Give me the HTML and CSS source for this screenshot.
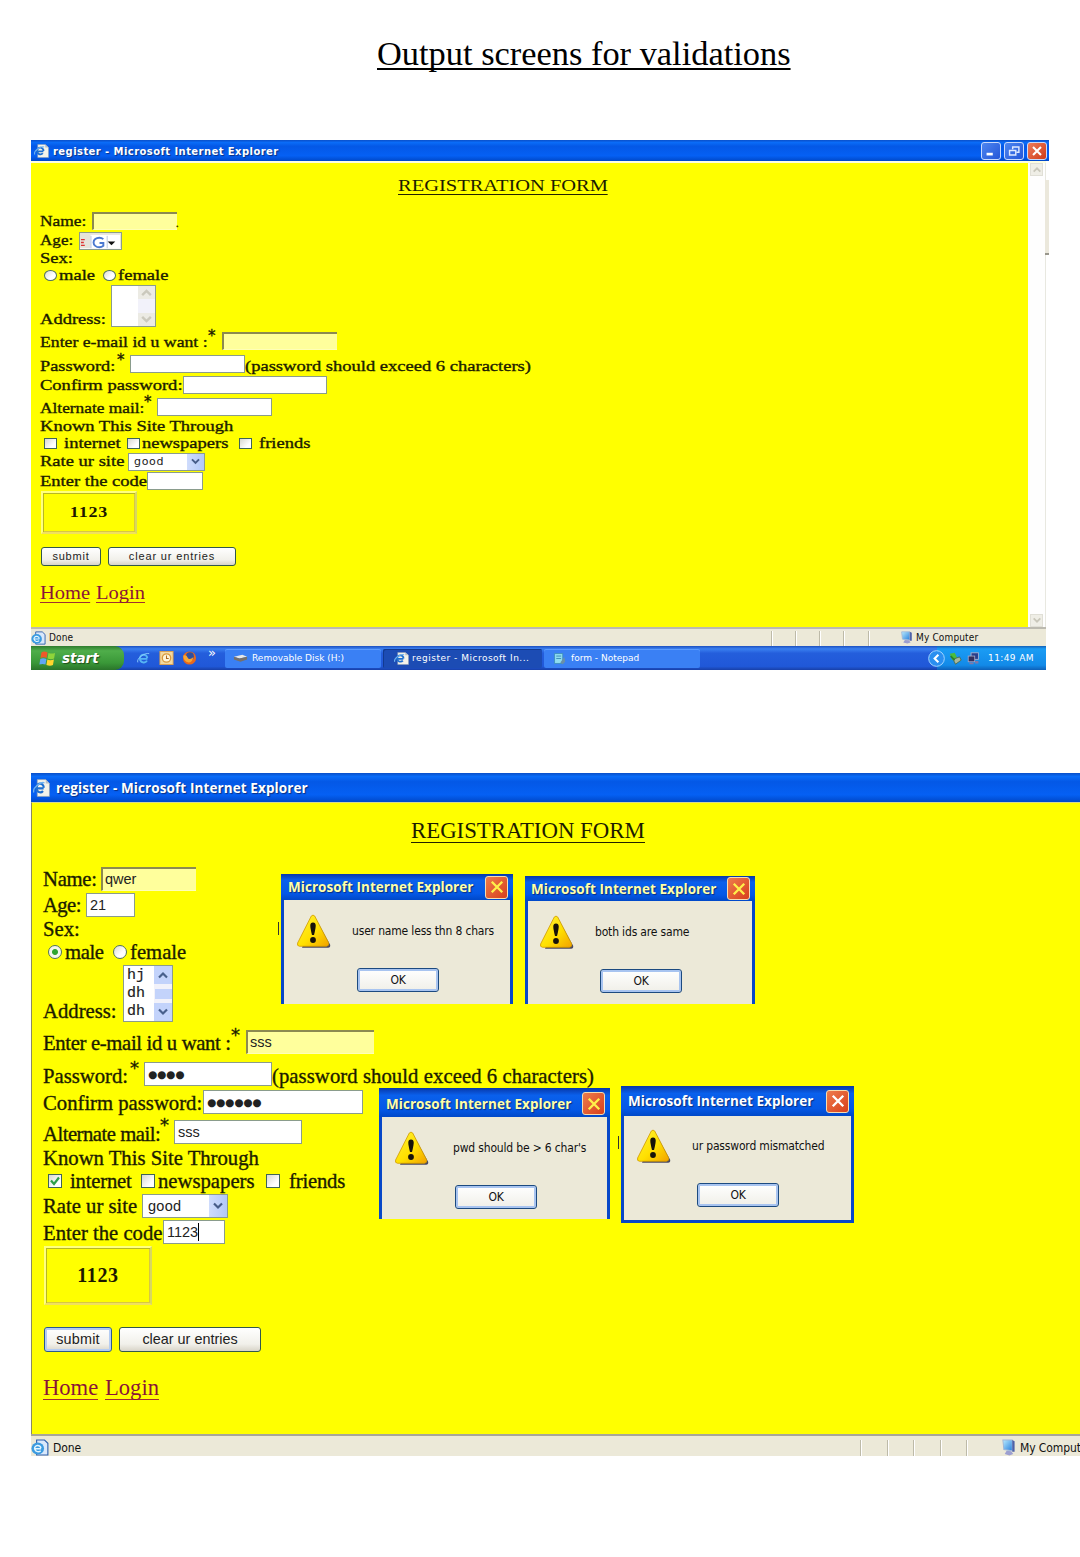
FILE: index.html
```html
<!DOCTYPE html>
<html lang="en">
<head>
<meta charset="utf-8">
<title>Output screens for validations</title>
<link rel="stylesheet" href="styles.css">
</head>
<body>
<svg class="defs" aria-hidden="true">
  <defs>
    <linearGradient id="warn" x1="0" y1="0" x2="1" y2="1"><stop offset="0" stop-color="#fff23a"/><stop offset=".55" stop-color="#ffe000"/><stop offset="1" stop-color="#f2a200"/></linearGradient>
    <linearGradient id="screenBlue" x1="0" y1="0" x2="1" y2="1"><stop offset="0" stop-color="#b8ecff"/><stop offset="1" stop-color="#2a80dc"/></linearGradient>
    <symbol id="ie-page" viewBox="0 0 16 16" preserveAspectRatio="none">
      <path d="M4 .5h8l3.500 3.500v11.500H4z" fill="#f4f3ea" stroke="#8c9bb0" stroke-width=".6"/>
      <path d="M12 .5v3.500h3.500" fill="#b8c0c8"/>
      <path d="M10 8.400H3.400a3.400 3.400 0 1 1 6.700-.6M9.400 10.600a3.400 3.400 0 0 1-6-2.400" fill="none" stroke="#1d6fd0" stroke-width="2"/>
      <path d="M.8 12C-.8 8 7 2.200 10.800 3.400" fill="none" stroke="#6cb0f0" stroke-width="1.300"/>
    </symbol>
    <symbol id="ie-status" viewBox="0 0 16 16" preserveAspectRatio="none">
      <path d="M5 1h7l3 3v11H5z" fill="#d9e8fb" stroke="#2c5fae" stroke-width="1"/>
      <circle cx="6" cy="9" r="5.600" fill="#3b9be0"/>
      <path d="M9 9.200H3.200a2.800 2.800 0 1 1 5.600-.6M8.600 11a3 3 0 0 1-5.200-1.400" fill="none" stroke="#e4f6ff" stroke-width="1.300"/>
    </symbol>
    <symbol id="computer" viewBox="0 0 16 16" preserveAspectRatio="none">
      <path d="M2 1l10 0v10L3 10z" fill="url(#screenBlue)" stroke="#9fb6d8" stroke-width="1"/>
      <path d="M6 11l5 .5 2 2.500-4 1.500-5-1.500z" fill="#9c9fd0"/>
      <path d="M12 1l2.500 1v10L12 12z" fill="#4f62a8"/>
    </symbol>
    <symbol id="warning" viewBox="0 0 34 34">
      <path d="M17.500 2.500L33 30.500q1 3-2 3.300H5" fill="#4a4860"/>
      <path d="M14.300 2Q16 .2 17.700 2L31.500 28.500Q32.500 32 29.500 32.300H2.500Q-.3 32 .6 29z" fill="url(#warn)" stroke="#d09a00" stroke-width=".8"/>
      <path d="M13.300 11.500q0-3 2.700-3t2.700 3q0 3-1.700 9.500h-2q-1.700-6.500-1.700-9.500z" fill="#17130a"/>
      <circle cx="16" cy="26" r="2.900" fill="#17130a"/>
    </symbol>
    <symbol id="cross" viewBox="0 0 12 12"><path d="M1.500 1.500l9 9M10.500 1.500l-9 9" fill="none" stroke="currentColor" stroke-width="2"/></symbol>
    <symbol id="up" viewBox="0 0 12 8"><path d="M2 6.500L6 2.500l4 4" fill="none" stroke="currentColor" stroke-width="2.200"/></symbol>
    <symbol id="down" viewBox="0 0 12 8"><path d="M2 1.500l4 4 4-4" fill="none" stroke="currentColor" stroke-width="2.200"/></symbol>
  </defs>
</svg>

<main class="page">
  <h1 class="heading">Output screens for validations</h1>

  <section class="window first">
    <header class="titlebar">
      <svg class="app-icon"><use href="#ie-page"/></svg>
      <span class="title">register - Microsoft Internet Explorer</span>
      <span class="win-btn"><svg viewBox="0 0 20 18"><path d="M5 12.500h7" stroke="#fff" stroke-width="3"/></svg></span>
      <span class="win-btn"><svg viewBox="0 0 20 18"><path d="M8.500 7V4.500h7v6H13M5 8.500h7v5H5z" fill="none" stroke="#dfe9ff" stroke-width="1.600"/></svg></span>
      <span class="win-btn red"><svg viewBox="0 0 20 18"><path d="M5.500 4.500l9 9M14.500 4.500l-9 9" stroke="#fff" stroke-width="2.300"/></svg></span>
    </header>
    <div class="viewport">
      <form class="form">
        <h2 class="form-title"><span class="ink">REGISTRATION FORM</span></h2>
        <div class="row r-name"><label class="l-name"><span class="ink">Name:</span></label><span class="field sunken f-name"></span><span class="dot">.</span></div>
        <div class="row r-age"><label class="l-age"><span class="ink">Age:</span></label><span class="field toolbar-bit"><svg viewBox="0 0 43 17"><path d="M0 0h43v17H0z" fill="#e6e4da"/><path d="M11 3h31v14H11z" fill="#fff"/><path d="M1 8h4M1 11h3M1 14h4" stroke="#d33" stroke-width="1.500"/><path d="M11.500 4v13M28.500 4v13" stroke="#b8c4e0"/><path d="M24.500 7.500a6 5 0 1 0 0 7v-3h-4" fill="none" stroke="#4a78d0" stroke-width="2"/><path d="M29 10h8l-4 4z" fill="#111"/></svg></span></div>
        <div class="row r-sex"><label><span class="ink">Sex:</span></label></div>
        <div class="row r-radio"><span class="radio"></span><label class="l-male"><span class="ink">male</span></label><span class="radio"></span><label><span class="ink">female</span></label></div>
        <div class="row r-address"><label class="l-address"><span class="ink">Address:</span></label><span class="field area"><span class="lines"></span><span class="bar off"><svg><use href="#up"/></svg><svg><use href="#down"/></svg></span></span></div>
        <div class="row r-email"><label class="l-email"><span class="ink">Enter e-mail id u want :</span></label><sup class="star">*</sup><span class="field sunken f-text"></span></div>
        <div class="row r-pass"><label class="l-pass"><span class="ink">Password:</span></label><sup class="star">*</sup><span class="field f-text"></span><span class="note"><span class="ink">(password should exceed 6 characters)</span></span></div>
        <div class="row r-confirm"><label class="l-confirm"><span class="ink">Confirm password:</span></label><span class="field f-wide"></span></div>
        <div class="row r-alt"><label class="l-alt"><span class="ink">Alternate mail:</span></label><sup class="star">*</sup><span class="field f-text"></span></div>
        <div class="row r-known"><label><span class="ink">Known This Site Through</span></label></div>
        <div class="row r-checks"><span class="check"></span><label class="l-net"><span class="ink">internet</span></label><span class="check"></span><label class="l-news"><span class="ink">newspapers</span></label><span class="check"></span><label class="l-friends"><span class="ink">friends</span></label></div>
        <div class="row r-rate"><label class="l-rate"><span class="ink">Rate ur site</span></label><span class="field select"><span class="val">good</span><span class="drop"><svg><use href="#down"/></svg></span></span></div>
        <div class="row r-code"><label class="l-code"><span class="ink">Enter the code</span></label><span class="field f-code"></span></div>
        <div class="captcha"><span class="ink">1123</span></div>
        <div class="buttons"><span class="button b-submit">submit</span><span class="button b-clear">clear ur entries</span></div>
        <nav class="links"><a class="k-home"><span class="ink">Home</span></a><a><span class="ink">Login</span></a></nav>
      </form>
      <div class="page-scroll"><span><svg><use href="#up"/></svg></span><span><svg><use href="#down"/></svg></span></div>
      <div class="edge-strip"></div>
    </div>
    <footer class="status">
      <svg class="status-icon"><use href="#ie-status"/></svg><span class="done">Done</span>
      <span class="cells"><i></i><i></i><i></i><i></i><i></i></span>
      <svg class="pc-icon"><use href="#computer"/></svg><span class="zone">My Computer</span>
    </footer>
    <div class="taskbar">
      <div class="start"><svg viewBox="0 0 20 16"><path d="M3 1.500q3-1.700 6.500 0L8.500 7.500q-3-1.500-6.500 0z" fill="#f0582a"/><path d="M10.500 2q3 1.500 7 0L16.500 8q-3 1.500-7 0z" fill="#8fd43a"/><path d="M1.800 8.500q3-1.700 6.500 0l-1 6q-3-1.500-6.500 0z" fill="#5fa6f5"/><path d="M9.300 9q3 1.500 7 0l-1 6q-3 1.500-7 0z" fill="#ffd52e"/></svg><b>start</b></div>
      <div class="quick">
        <svg viewBox="0 0 16 16"><path d="M12.500 9H4a4 4 0 1 1 8.300-1M12 11a4.300 4.300 0 0 1-8-2" fill="none" stroke="#56b4f4" stroke-width="2.200"/><path d="M1.500 13C-.5 9 9 1.500 14.500 3" fill="none" stroke="#8fd0ff"/></svg>
        <svg viewBox="0 0 16 16"><rect x=".5" y=".5" width="15" height="15" fill="#f3d9a0" stroke="#e0a048"/><circle cx="8" cy="8" r="4.800" fill="#fff5d8" stroke="#d99a3c" stroke-width="1.500"/><path d="M8 5v3.500h2.500" fill="none" stroke="#b06a20" stroke-width="1.200"/></svg>
        <svg viewBox="0 0 16 16"><circle cx="8" cy="8" r="7.500" fill="#e8681c"/><circle cx="8.500" cy="6" r="4.500" fill="#2f4f9f"/><path d="M.8 5q4-1 5 2.500t6.500-.5Q11 13 7 13 1 12 .8 5z" fill="#f9a832"/></svg>
      </div>
      <span class="chev">»</span>
      <div class="task"><svg viewBox="0 0 16 12"><path d="M1 4l9-2 5 2-8 2z" fill="#e8e8e8"/><path d="M1 4l6 2 8-2v3L8 9.500 1 7z" fill="#77706a"/></svg>Removable Disk (H:)</div>
      <div class="task active"><svg><use href="#ie-page"/></svg>register - Microsoft In...</div>
      <div class="task"><svg viewBox="0 0 16 16"><rect x="2" y="2" width="10" height="12" fill="#8fdcf0" stroke="#3c8fb8"/><path d="M4 5h6M4 8h6" stroke="#2f80b0"/><path d="M9 13l5-7 1 6-3 3z" fill="#6a90a8"/></svg>form - Notepad</div>
      <div class="tray">
        <svg class="tray-arrow" viewBox="0 0 18 18"><circle cx="9" cy="9" r="8.300" fill="#2a8ff0" stroke="#a8d8ff"/><path d="M11 5L7 9l4 4" fill="none" stroke="#fff" stroke-width="2.200"/></svg>
        <svg viewBox="0 0 16 16"><path d="M1 2l6-1 3 6-6 3z" fill="#4cbc3c"/><path d="M5 9l8-3 2 4-7 5z" fill="#a8b89c" stroke="#45654a"/><path d="M2 5l5 5" stroke="#2b7f2b" stroke-width="2"/></svg>
        <svg viewBox="0 0 16 16"><rect x="5" y="1" width="9" height="8" fill="#29408c" stroke="#b8b8d0"/><rect x="1.500" y="5" width="8" height="7" fill="#33305c" stroke="#a8a8c8"/><path d="M10 11h4v3h-4zM3 13h5v2H3z" fill="#8078a8"/></svg>
        <span>11:49 AM</span>
      </div>
    </div>
  </section>

  <section class="window second">
    <header class="titlebar">
      <svg class="app-icon"><use href="#ie-page"/></svg>
      <span class="title">register - Microsoft Internet Explorer</span>
    </header>
    <div class="viewport">
      <form class="form">
        <h2 class="form-title"><span class="ink">REGISTRATION FORM</span></h2>
        <div class="row r-name"><label class="l-name"><span class="ink">Name:</span></label><span class="field sunken f-name">qwer</span></div>
        <div class="row r-age"><label class="l-age"><span class="ink">Age:</span></label><span class="field f-age">21</span></div>
        <div class="row r-sex"><label><span class="ink">Sex:</span></label></div>
        <div class="row r-radio"><span class="radio on"></span><label class="l-male"><span class="ink">male</span></label><span class="radio"></span><label><span class="ink">female</span></label></div>
        <div class="row r-address"><label class="l-address"><span class="ink">Address:</span></label><span class="field area"><span class="lines">hj<br>dh<br>dh</span><span class="bar"><svg><use href="#up"/></svg><i></i><svg><use href="#down"/></svg></span></span></div>
        <div class="row r-email"><label class="l-email"><span class="ink">Enter e-mail id u want :</span></label><sup class="star">*</sup><span class="field sunken f-text">sss</span></div>
        <div class="row r-pass"><label class="l-pass"><span class="ink">Password:</span></label><sup class="star">*</sup><span class="field f-text secret">●●●●</span><span class="note"><span class="ink">(password should exceed 6 characters)</span></span></div>
        <div class="row r-confirm"><label class="l-confirm"><span class="ink">Confirm password:</span></label><span class="field f-wide secret">●●●●●●</span></div>
        <div class="row r-alt"><label class="l-alt"><span class="ink">Alternate mail:</span></label><sup class="star">*</sup><span class="field f-text">sss</span></div>
        <div class="row r-known"><label><span class="ink">Known This Site Through</span></label></div>
        <div class="row r-checks"><span class="check"><svg viewBox="0 0 12 12"><path d="M2 5.500l3 3.500 5-6.500" fill="none" stroke="#2fa048" stroke-width="2.200"/></svg></span><label class="l-net"><span class="ink">internet</span></label><span class="check"></span><label class="l-news"><span class="ink">newspapers</span></label><span class="check"></span><label class="l-friends"><span class="ink">friends</span></label></div>
        <div class="row r-rate"><label class="l-rate"><span class="ink">Rate ur site</span></label><span class="field select"><span class="val">good</span><span class="drop"><svg><use href="#down"/></svg></span></span></div>
        <div class="row r-code"><label class="l-code"><span class="ink">Enter the code</span></label><span class="field f-code"><span>1123</span><i class="caret"></i></span></div>
        <div class="captcha"><span class="ink">1123</span></div>
        <div class="buttons"><span class="button b-submit focus">submit</span><span class="button b-clear">clear ur entries</span></div>
        <nav class="links"><a class="k-home"><span class="ink">Home</span></a><a><span class="ink">Login</span></a></nav>
      </form>

      <div class="dialog d1"><div class="d-title"><span>Microsoft Internet Explorer</span><b><svg><use href="#cross"/></svg></b></div><div class="d-msg"><svg><use href="#warning"/></svg><p>user name less thn 8 chars</p></div><span class="ok">OK</span></div>
      <div class="dialog d2"><div class="d-title"><span>Microsoft Internet Explorer</span><b><svg><use href="#cross"/></svg></b></div><div class="d-msg"><svg><use href="#warning"/></svg><p>both ids are same</p></div><span class="ok">OK</span></div>
      <div class="dialog d3"><div class="d-title"><span>Microsoft Internet Explorer</span><b><svg><use href="#cross"/></svg></b></div><div class="d-msg"><svg><use href="#warning"/></svg><p>pwd should be &gt; 6 char's</p></div><span class="ok">OK</span></div>
      <div class="dialog d4"><div class="d-title"><span>Microsoft Internet Explorer</span><b><svg><use href="#cross"/></svg></b></div><div class="d-msg"><svg><use href="#warning"/></svg><p>ur password mismatched</p></div><span class="ok">OK</span></div>
      <i class="tick t1"></i><i class="tick t2"></i>
    </div>
    <footer class="status">
      <svg class="status-icon"><use href="#ie-status"/></svg><span class="done">Done</span>
      <span class="cells"><i></i><i></i><i></i><i></i><i></i></span>
      <svg class="pc-icon"><use href="#computer"/></svg><span class="zone">My Computer</span>
    </footer>
  </section>
</main>
</body>
</html>
```

FILE: styles.css
```css
* { box-sizing: border-box; }
body { margin: 0; background: #fff; }
.defs { position: absolute; width: 0; height: 0; }
svg { display: block; flex: none; }
.page { width: 1080px; height: 1557px; overflow: hidden; font-family: "Liberation Serif", "Times New Roman", serif; color: #1c1c00; }
.heading { margin: 0; padding: 33px 0 0 377px; height: 140px; font-weight: 400; font-size: 34.400px; line-height: 40px; color: #000; text-decoration: underline; text-decoration-thickness: 2px; text-underline-offset: 3px; text-decoration-skip-ink: none; white-space: nowrap; }

.window { margin-left: 31px; }
.first { width: 1018px; height: 529px; margin-bottom: 104px; }
.second { width: 1049px; overflow: hidden; }

.titlebar { display: flex; align-items: center; background: linear-gradient(#0a4fc8 0, #0a6cf8 12%, #0458e6 30%, #0560f4 75%, #0048c8 100%); color: #fff; font-family: "DejaVu Sans", sans-serif; font-weight: 700; white-space: nowrap; }
.title { flex: 1; text-shadow: 1px 1px 1px #0a2f80; }
.first .titlebar { height: 21px; padding: 1px 2px 0 3px; gap: 3px; }
.first .app-icon { width: 15px; height: 14px; }
.first .title { font-size: 10px; margin-left: 1px; letter-spacing: .43px; }
.second .titlebar { height: 29px; padding: 1px 0 0 2px; }
.second .app-icon { width: 17px; height: 18px; }
.second .title { font-family: "Open Sans", sans-serif; font-size: 13.500px; margin-left: 6px; letter-spacing: .1px; }
.win-btn { width: 20px; height: 18px; border: 1px solid #c9dafc; border-radius: 3px; background: linear-gradient(135deg, #4d86f0, #2456d8); }
.win-btn svg { width: 18px; height: 16px; }
.red { background: linear-gradient(135deg, #ee7c5c, #cf3c18); }

.viewport { position: relative; display: flex; }
.first .viewport { height: 466px; border-top: 2px solid #fdfde0; width: 1015px; }
.second .viewport { height: 632px; border-left: 1px solid #8a8a60; border-top: 1px solid #d8d890; }
.form { flex: 1; margin: 0; background: #ff0; white-space: nowrap; }
.page-scroll { width: 18px; padding: 0 2px; display: flex; flex-direction: column; justify-content: space-between; background: #fefefe; border-right: 1px solid #e8e8e0; }
.page-scroll span { height: 13px; background: #efeee6; border: 1px solid #e0dfd6; color: #c9c7ba; display: grid; place-items: center; }
.page-scroll svg { width: 10px; height: 7px; }
.edge-strip { position: absolute; left: 1014px; top: 17px; width: 4px; height: 75px; background: #ebe8dc; border-bottom: 2px solid #99978c; }

.form-title { margin: 0; font-weight: 400; text-decoration: none; }
.first .form-title { height: 48px; padding: 13px 0 0 367px; font-size: 17px; line-height: 20px; }
.second .form-title { height: 62px; padding: 15px 0 0 379px; font-size: 22.800px; line-height: 26px; }
.form-title .ink { border-bottom: 1px solid #222200; display: inline-block; }
.first .form-title .ink { line-height: 16px; transform: scaleX(1.205); }
.second .form-title .ink { line-height: 22px; }

.ink { display: inline-block; transform-origin: 0 50%; }
.row { display: flex; align-items: center; -webkit-text-stroke: .35px #1c1c00; }
.row label { flex: none; }
.field { flex: none; display: flex; align-items: center; background: #fff; border: 1px solid #8a9c8c; overflow: hidden; color: #222; font-family: "Liberation Sans", Arial, sans-serif; -webkit-text-stroke: 0; }
.sunken { background: #ffff9c; border: 0; border-top: 2px solid #8c8a50; border-left: 2px solid #8c8a50; border-bottom: 1px solid #ffffb8; }
.star { flex: none; align-self: flex-start; font-family: "DejaVu Sans", sans-serif; font-weight: 400; line-height: 1; }
.radio { flex: none; border: 1px solid #4f7064; border-radius: 50%; background: linear-gradient(135deg, #dcdcd0, #fff 60%); }
.on { background: radial-gradient(circle, #2fa52f 0 2.500px, #f4f6ec 3.500px); }
.check { flex: none; border: 1px solid #3f6458; background: linear-gradient(135deg, #d8d8d0, #fff 70%); }
.check svg { width: 12px; height: 12px; }
.select { justify-content: space-between; }
.drop { display: grid; place-items: center; background: linear-gradient(90deg, #cfdcfc, #b2c8f6); color: #465c88; height: 100%; }
.bar { display: flex; flex-direction: column; justify-content: space-between; background: #f2f2fa; color: #48608c; height: 100%; }
.bar svg { background: #c3d3fb; padding: 4px 2px; }
.off { color: #cbc9bd; }
.off svg { background: #ecebe4; }
.captcha { display: grid; place-items: center; font-weight: 700; border: 2px solid #ffff80; border-right-color: #d8d860; border-bottom-color: #f0e060; box-shadow: inset 1px 1px #b8b820, inset -1px -1px #d8c840; color: #1c1800; }
.buttons, .links { display: flex; }
.button { display: grid; place-items: center; border: 1px solid #32584c; border-radius: 3px; background: linear-gradient(#fff, #f1f0ea 70%, #d8d4c8); font-family: "Liberation Sans", Arial, sans-serif; color: #222; }
.focus { border-color: #2a5a90; box-shadow: inset 0 0 0 2px #b4ccf2; }
.links a { color: #8a1438; }
.links .ink { border-bottom: 1px solid #a03030; }

/* first form: wide glyphs on short lines */
.first .row, .first .links { font-size: 15px; line-height: 15px; padding-left: 9px; }
.first .row .ink { transform: scaleX(1.235); }
.first .row .l-name .ink { transform: scaleX(1.160); }
.first .row .l-age .ink { transform: scaleX(1.140); }
.first .row .l-email .ink { transform: scaleX(1.180); }
.first .row .l-alt .ink { transform: scaleX(1.155); }
.first .row .l-pass .ink { transform: scaleX(1.220); }
.first .r-name { height: 20px; }
.first .r-age { height: 19px; }
.first .r-sex { height: 16px; }
.first .r-radio { height: 18px; padding-left: 13px; }
.first .r-address { height: 45px; align-items: flex-end; padding-bottom: 2px; }
.first .r-email { height: 24px; }
.first .r-pass { height: 22px; }
.first .r-confirm { height: 20px; }
.first .r-alt { height: 23px; }
.first .r-known { height: 16px; }
.first .r-checks { height: 18px; padding-left: 13px; }
.first .r-rate, .first .r-code { height: 19px; }
.first .l-name { width: 52px; }
.first .l-age { width: 39px; }
.first .l-male { width: 44px; }
.first .l-address { width: 71px; }
.first .l-email { width: 168px; padding-top: 2px; }
.first .l-pass { width: 77px; padding-top: 4px; }
.first .l-confirm { width: 143px; }
.first .l-alt { width: 104px; padding-top: 4px; }
.first .l-net { width: 63px; margin-left: 7px; }
.first .l-news { width: 97px; margin-left: 2px; }
.first .l-friends { margin-left: 7px; }
.first .l-rate { width: 88px; }
.first .l-code { width: 107px; padding-top: 1px; }
.first .note { padding-top: 4px; }
.first .star { width: 14px; font-size: 15px; }
.first .r-pass .star, .first .r-alt .star { width: 13px; }
.first .radio { width: 13px; height: 11px; margin-right: 2px; }
.first .check { width: 13px; height: 11px; }
.first .field { height: 18px; }
.first .f-name { width: 85px; }
.first .dot { align-self: flex-end; font-size: 10px; margin-left: -1px; }
.first .toolbar-bit { width: 43px; }
.first .f-text { width: 115px; }
.first .f-wide { width: 144px; }
.first .f-code { width: 56px; }
.first .area { width: 45px; height: 42px; justify-content: flex-end; }
.first .bar { width: 17px; }
.first .bar svg { width: 17px; height: 13px; padding: 2px; }
.first .select { width: 77px; font-size: 11px; letter-spacing: .7px; padding-left: 5px; font-family: "DejaVu Sans", sans-serif; }
.first .drop { width: 17px; }
.first .drop svg { width: 11px; height: 7px; }
.first .captcha { margin: 1px 0 0 10px; width: 96px; height: 43px; font-size: 15px; letter-spacing: .7px; }
.first .captcha .ink { transform: scaleX(1.200); transform-origin: 50%; }
.first .buttons { margin: 13px 0 0 10px; gap: 7px; font-size: 11px; letter-spacing: .8px; }
.first .b-clear { letter-spacing: .85px; }
.first .button { height: 19px; padding-bottom: 1px; }
.first .b-submit { width: 60px; }
.first .b-clear { width: 128px; }
.first .links { margin-top: 19px; font-size: 18px; line-height: 17px; }
.first .links .ink { transform: scaleX(1.140); }
.first .k-home { width: 56px; }

/* second form */
.second .row, .second .links { font-size: 20.700px; line-height: 22px; padding-left: 11px; }
.second .r-name { height: 27px; }
.second .r-age { height: 26px; }
.second .r-sex { height: 22px; }
.second .r-radio { height: 24px; padding-left: 16px; }
.second .r-address { height: 60px; align-items: flex-end; padding-bottom: 2px; }
.second .r-email { height: 35px; }
.second .r-pass { height: 29px; }
.second .r-confirm { height: 28px; }
.second .r-alt { height: 32px; }
.second .r-known { height: 20px; }
.second .r-checks { height: 26px; padding-left: 16px; }
.second .r-rate { height: 24px; }
.second .r-code { height: 28px; }
.second .l-name { width: 58px; letter-spacing: -.3px; }
.second .l-age { width: 43px; letter-spacing: -.6px; }
.second .l-male { width: 48px; letter-spacing: -.4px; }
.second .l-address { width: 80px; }
.second .l-email { width: 188px; padding-top: 3px; letter-spacing: -.34px; }
.second .l-pass { width: 87px; padding-top: 4px; }
.second .l-confirm { width: 160px; padding-top: 1px; }
.second .l-alt { width: 117px; padding-top: 4px; letter-spacing: -.5px; }
.second .l-net { width: 71px; margin-left: 8px; letter-spacing: -.2px; }
.second .l-news { width: 108px; margin-left: 3px; }
.second .l-friends { margin-left: 9px; letter-spacing: -.2px; }
.second .l-rate { width: 99px; }
.second .l-code { width: 120px; padding-top: 1px; }
.second .note { padding-top: 4px; letter-spacing: .07px; }
.second .star { width: 15px; font-size: 18px; }
.second .r-pass .star, .second .r-alt .star { width: 14px; }
.second .r-email .star { padding-top: 2px; }
.second .radio { width: 14px; height: 14px; margin-right: 3px; }
.second .check { width: 14px; height: 14px; }
.second .field { height: 24px; font-size: 14.500px; padding-left: 3px; }
.second .sunken { padding-left: 2px; }
.second .f-name { width: 95px; }
.second .f-age { width: 49px; }
.second .f-text { width: 128px; }
.second .f-wide { width: 160px; }
.second .f-code { width: 62px; }
.caret { width: 1px; height: 18px; background: #000; }
.second .secret { font-family: "DejaVu Sans", sans-serif; font-size: 10.500px; letter-spacing: -.1px; }
.second .area { width: 50px; height: 57px; justify-content: space-between; }
.second .lines { font: 15px/18px "Liberation Mono", monospace; -webkit-text-stroke: .2px #222; padding-top: 1px; }
.second .bar { width: 18px; }
.second .bar svg { width: 18px; height: 18px; padding: 4px 3px; }
.second .bar i { height: 10px; background: #c3d3fb; margin-left: 1px; }
.second .select { width: 86px; padding-left: 5px; letter-spacing: .3px; }
.second .drop { width: 18px; }
.second .drop svg { width: 12px; height: 8px; }
.second .captcha { margin: 0 0 0 12px; width: 108px; height: 59px; font-size: 20px; letter-spacing: .6px; }
.second .buttons { margin: 22px 0 0 12px; gap: 7px; font-size: 14.400px; }
.second .button { height: 25px; padding-bottom: 2px; }
.second .b-submit { width: 68px; letter-spacing: .2px; }
.second .b-clear { width: 142px; }
.second .links { margin-top: 25px; font-size: 22.600px; line-height: 22px; }
.second .k-home { width: 62px; }

/* alert boxes over the second form */
.dialog { position: absolute; height: 130px; border: solid #0848c8; border-width: 0 3px; background: #ece9d8; font-family: "DejaVu Sans Condensed", "DejaVu Sans", sans-serif; color: #111; }
.d1 { left: 249px; top: 71px; width: 232px; }
.d2 { left: 493px; top: 73px; width: 230px; height: 128px; }
.d3 { left: 347px; top: 285px; width: 231px; height: 131px; }
.d4 { left: 589px; top: 283px; width: 233px; height: 137px; border-bottom-width: 3px; }
.d-title { height: 26px; margin: 0 -3px; padding: 0 5px 0 7px; display: flex; align-items: center; justify-content: space-between; background: linear-gradient(#0838a8, #0a60ec 25%, #0458e6 75%, #0048c8); color: #ffffa8; font: 700 13.500px "Open Sans", sans-serif; letter-spacing: .05px; white-space: nowrap; text-shadow: 1px 1px 1px #0a2f80; }
.d-title b { width: 23px; height: 23px; display: grid; place-items: center; color: #fff04a; border: 1px solid #f6ddb0; border-radius: 3px; background: linear-gradient(135deg, #ee7c4c, #d8401c); }
.d-title svg { width: 14px; height: 14px; }
.d2 .d-title { height: 25px; padding-left: 6px; }
.d3 .d-title { height: 29px; padding-top: 2px; }
.d4 .d-title { height: 30px; color: #fff; }
.d4 .d-title b { color: #fff; }
.d-msg { display: flex; align-items: center; margin: 14px 0 0 13px; height: 34px; }
.d2 .d-msg { margin-left: 12px; }
.d4 .d-msg { margin-top: 13px; }
.d-msg svg { width: 34px; height: 34px; }
.d-msg p { margin: 0 0 0 21px; font-size: 12px; letter-spacing: -.17px; white-space: nowrap; }
.d3 .d-msg p { margin-left: 24px; }
.ok { display: grid; place-items: center; width: 82px; height: 24px; margin: 20px 0 0 73px; font-size: 12px; letter-spacing: -.3px; border: 1px solid #1c4a80; border-radius: 3px; background: linear-gradient(#fff, #f0efe8); box-shadow: inset 0 0 0 2px #a8c4f0; }
.d2 .ok { margin-left: 72px; }
.tick { position: absolute; width: 1px; height: 13px; background: #333; }
.t1 { left: 246px; top: 119px; }
.t2 { left: 586px; top: 333px; }

.status { display: flex; align-items: center; background: #ece9d8; font-family: "DejaVu Sans Condensed", "DejaVu Sans", sans-serif; color: #111; white-space: nowrap; overflow: hidden; }
.cells { display: flex; align-self: stretch; }
.cells i { border-left: 1px solid #bdbaa8; box-shadow: inset 1px 0 #fff; }
.done { flex: 1; }
.first .status { width: 1015px; height: 19px; border-top: 2px solid #bcbab0; font-size: 10px; letter-spacing: .15px; }
.first .status-icon { width: 15px; height: 14px; margin-right: 3px; }
.first .cells i { width: 24.300px; margin-top: 2px; }
.first .pc-icon { width: 13px; height: 13px; margin: 0 3px 0 8px; }
.first .zone { width: 130px; }
.second .status { height: 22px; border-top: 2px solid #a8a698; padding-top: 3px; font-size: 12px; letter-spacing: -.1px; }
.second .status-icon { width: 18px; height: 17px; margin-right: 4px; }
.second .cells i { width: 26.600px; margin-top: 1px; }
.second .pc-icon { width: 15px; height: 17px; margin: 0 4px 0 8px; }
.second .zone { width: 60px; }

.taskbar { display: flex; align-items: center; width: 1015px; height: 24px; background: linear-gradient(#1c50c0 0, #3a80f0 12%, #245edc 30%, #2058d8 85%, #1840a8); color: #fff; font-family: "DejaVu Sans", sans-serif; font-size: 9px; white-space: nowrap; }
.start { width: 93px; height: 24px; display: flex; align-items: center; gap: 4px; padding-left: 7px; border-radius: 0 9px 9px 0; background: linear-gradient(#2f7c2f, #4fae4a 20%, #3a9838 70%, #2a742a); font-size: 13.500px; font-style: italic; text-shadow: 1px 1px 1px #1c4f1c; }
.start svg { width: 20px; height: 15px; }
.quick { display: flex; gap: 8px; margin-left: 12px; }
.quick svg { width: 15px; height: 14px; }
.chev { width: 17px; margin-left: 11px; font-size: 13px; line-height: 14px; align-self: flex-start; }
.task { display: flex; align-items: center; gap: 4px; width: 156px; height: 19px; padding-left: 8px; margin-right: 2px; border-radius: 2px; background: #3a80f4; box-shadow: inset 0 1px #5c9cff; }
.task svg { width: 15px; height: 13px; }
.active { background: #1c4cb4; box-shadow: inset 1px 1px #123a90; padding-left: 11px; width: 159px; letter-spacing: .5px; }
.active svg { margin-right: -1px; }
.tray { margin-left: auto; width: 109px; height: 24px; display: flex; align-items: center; gap: 3px; background: linear-gradient(#1460b8 0, #1a9cf4 12%, #128ae8 80%, #0e60b8); }
.tray svg { width: 15px; height: 13px; }
.tray .tray-arrow { width: 17px; height: 17px; margin-left: -9px; }
.tray span { margin-left: 4px; letter-spacing: .4px; }
```
